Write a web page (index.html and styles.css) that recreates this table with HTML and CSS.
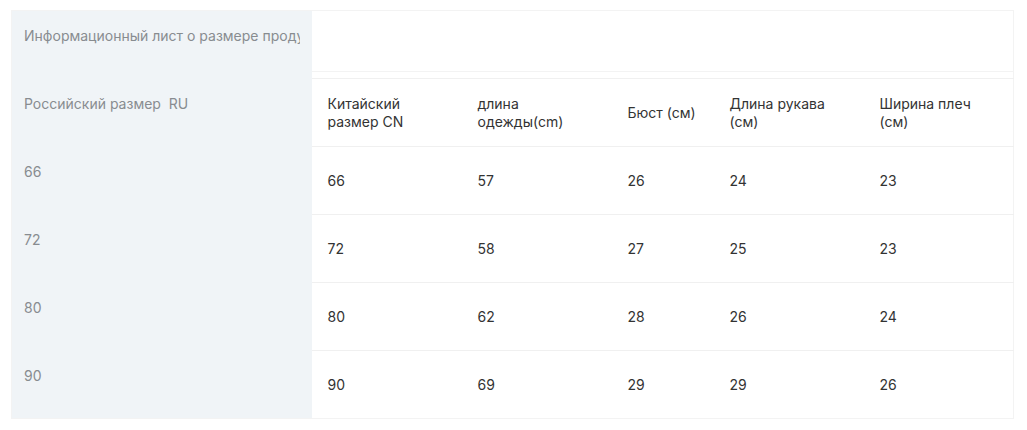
FILE: index.html
```html
<!DOCTYPE html>
<html lang="ru">
<head>
<meta charset="utf-8">
<link rel="stylesheet" href="styles.css">
</head>
<body>
<div class="wrap">
<table class="size-table">
  <colgroup>
    <col class="c-ru">
    <col class="c-cn">
    <col class="c-len">
    <col class="c-bust">
    <col class="c-sleeve">
    <col class="c-shoulder">
  </colgroup>
  <tbody>
    <tr class="row-title">
      <th class="lead"><div class="clip">Информационный лист о размере продукта</div></th>
      <td></td><td></td><td></td><td></td><td></td>
    </tr>
    <tr class="row-head">
      <th class="lead">Российский размер&nbsp; RU</th>
      <td>Китайский размер CN</td>
      <td>длина одежды(cm)</td>
      <td class="bust">Бюст (см)</td>
      <td>Длина рукава (см)</td>
      <td>Ширина плеч (см)</td>
    </tr>
    <tr>
      <th class="lead">66</th>
      <td>66</td><td>57</td><td class="bust">26</td><td>24</td><td>23</td>
    </tr>
    <tr>
      <th class="lead">72</th>
      <td>72</td><td>58</td><td class="bust">27</td><td>25</td><td>23</td>
    </tr>
    <tr>
      <th class="lead">80</th>
      <td>80</td><td>62</td><td class="bust">28</td><td>26</td><td>24</td>
    </tr>
    <tr class="last">
      <th class="lead">90</th>
      <td>90</td><td>69</td><td class="bust">29</td><td>29</td><td>26</td>
    </tr>
  </tbody>
</table>
</div>
</body>
</html>
```

FILE: styles.css
```css
html, body {
  margin: 0;
  padding: 0;
  background: #ffffff;
}

body {
  font-family: Inter, "Noto Sans", "Liberation Sans", sans-serif;
  font-size: 14px;
  line-height: 18px;
  color: #333333;
}

.wrap {
  padding: 10px 0 0 11px;
}

.size-table {
  table-layout: fixed;
  width: 1002px;
  border-collapse: collapse;
  border: 1px solid #f3f3f3;
}

.c-ru { width: 300px; }
.c-cn { width: 150px; }
.c-len { width: 150px; }
.c-bust { width: 102px; }
.c-sleeve { width: 150px; }
.c-shoulder { width: 150px; }

.size-table tr {
  height: 68px;
}

.size-table th,
.size-table td {
  padding: 0 24px 0 16px;
  text-align: left;
  font-weight: 400;
}

.size-table td.bust {
  padding-right: 4px;
  white-space: nowrap;
}

.size-table td {
  vertical-align: middle;
  border-bottom: 1px solid #f0f0f0;
  color: #333333;
}

.size-table tr.last td {
  border-bottom: none;
}

.size-table tr.row-title td {
  box-shadow: inset 0 -6px 0 #ffffff, inset 0 -7px 0 #f3f3f3;
}

.size-table th.lead {
  background: #f0f4f7;
  color: #888c90;
  vertical-align: top;
  padding: 16px 12px 0 12px;
  border-bottom: none;
}

.clip {
  white-space: nowrap;
  overflow: hidden;
}
```
